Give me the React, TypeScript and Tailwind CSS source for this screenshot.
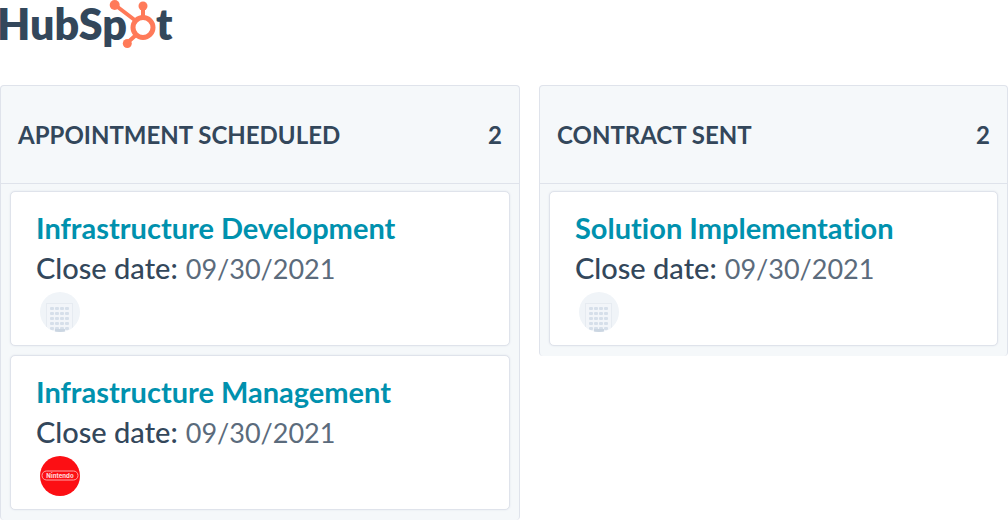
interface Deal {
  name: string
  closeDate: string
  company?: string
}

interface Stage {
  title: string
  total: number
  deals: Deal[]
}

const stages: Stage[] = [
  {
    title: 'APPOINTMENT SCHEDULED',
    total: 2,
    deals: [
      { name: 'Infrastructure Development', closeDate: '09/30/2021' },
      { name: 'Infrastructure Management', closeDate: '09/30/2021', company: 'Nintendo' },
    ],
  },
  {
    title: 'CONTRACT SENT',
    total: 2,
    deals: [{ name: 'Solution Implementation', closeDate: '09/30/2021' }],
  },
]

function Logo() {
  return (
    <svg className="block h-[49px] w-[172px] overflow-visible" viewBox="0 0 172 49" role="img" aria-label="HubSpot">
      <g fill="#33475b" fontFamily="Lato, sans-serif" fontWeight="800" fontSize="43">
        <text x="-3" y="40">HubSp</text>
        <text x="156" y="40">t</text>
      </g>
      <circle cx="143" cy="27.500" r="14" fill="#fff" />
      <g stroke="#ff7a59" fill="none">
        <circle cx="143" cy="27.500" r="10" strokeWidth="5" />
        <path d="M143 18V6M136 21L115 5M136 35L127 43" strokeWidth="4" />
      </g>
      <g fill="#ff7a59">
        <circle cx="114.700" cy="5" r="5" />
        <circle cx="143" cy="6" r="4.500" />
        <circle cx="127.300" cy="43.500" r="4.500" />
      </g>
    </svg>
  )
}

function BuildingAvatar() {
  const rows = [15, 20, 25, 30, 35]
  const cols = [10, 15, 20, 25]
  return (
    <svg className="block size-10 rounded-full" viewBox="0 0 40 40" aria-hidden="true">
      <rect width="40" height="40" fill="#f0f4f8" />
      <rect x="6.500" y="11.500" width="26" height="32" fill="#f2f5f9" stroke="#e6ebf1" />
      {rows.map((y) =>
        cols.map((x) => <rect key={`${x}-${y}`} x={x} y={y} width="4" height="3" rx="1" fill="#d6dfea" />)
      )}
      <rect x="15" y="37" width="10" height="4" fill="#cbd6e2" />
    </svg>
  )
}

function CompanyAvatar({ name }: { name: string }) {
  return (
    <svg className="block size-10 rounded-full" viewBox="0 0 40 40" role="img" aria-label={name}>
      <rect width="40" height="40" fill="#fc0f14" />
      <rect x="2" y="15" width="36" height="9" rx="4.500" fill="none" stroke="#ffa5a7" />
      <text
        x="20"
        y="22"
        textAnchor="middle"
        fill="#ffd0d1"
        fontFamily="Inter, sans-serif"
        fontWeight="800"
        fontSize="6"
      >
        {name}
      </text>
    </svg>
  )
}

function DealCard({ deal }: { deal: Deal }) {
  return (
    <li className="rounded-[5px] border border-[#dfe3eb] bg-white px-[25px] pt-4 pb-[13px] shadow-[0_0_2px_#dfe3eb]">
      <a href="#" className="block text-[29px] leading-10 font-bold text-[#0091ae]">
        {deal.name}
      </a>
      <p className="flex h-10 items-baseline gap-2 leading-10">
        <span className="text-[29px] font-medium">Close date:</span>
        <span className="text-[27px] font-normal text-[#5b6b7c]">{deal.closeDate}</span>
      </p>
      <div className="mt-1 ml-1">
        {deal.company ? <CompanyAvatar name={deal.company} /> : <BuildingAvatar />}
      </div>
    </li>
  )
}

function StageColumn({ stage }: { stage: Stage }) {
  return (
    <section className="rounded border border-b-0 border-[#dfe3eb] bg-[#f5f8fa]">
      <header className="flex h-[98px] items-center justify-between border-b border-[#dfe3eb] px-[17px] text-2xl font-bold">
        <h2>{stage.title}</h2>
        <span>{stage.total}</span>
      </header>
      <ul className="space-y-[9px] px-[9px] pt-[7px] pb-[10px]">
        {stage.deals.map((deal) => (
          <DealCard key={deal.name} deal={deal} />
        ))}
      </ul>
    </section>
  )
}

export default function App() {
  return (
    <main className="bg-white font-['Lato',sans-serif] text-[#33475b] [font-variant-ligatures:none]">
      <Logo />
      <div className="mt-9 grid grid-cols-[520fr_469fr] items-start gap-[19px]">
        {stages.map((stage) => (
          <StageColumn key={stage.title} stage={stage} />
        ))}
      </div>
    </main>
  )
}
